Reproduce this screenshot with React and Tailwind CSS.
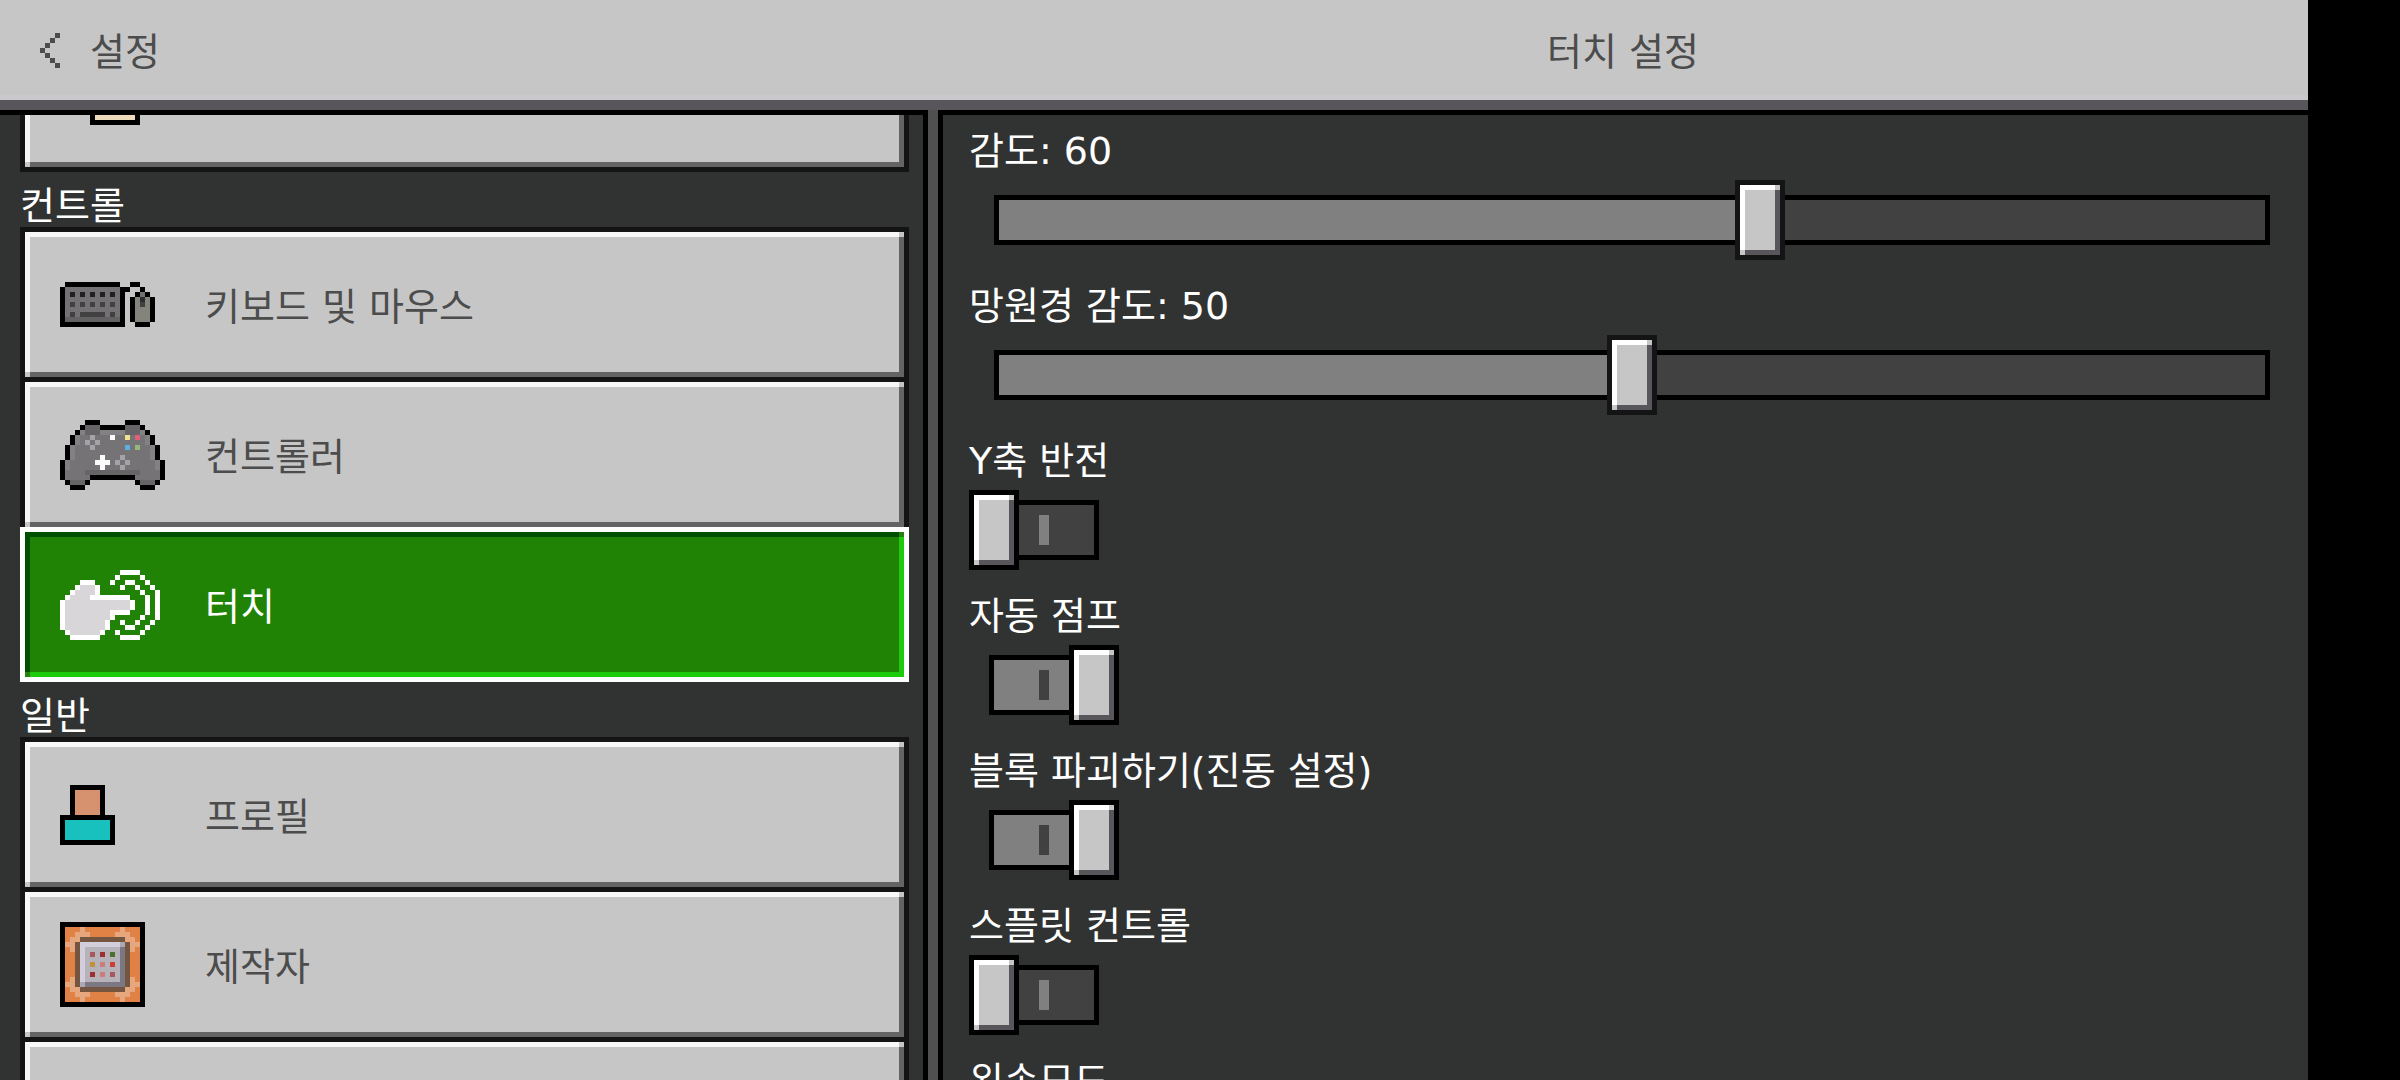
import React, { useState } from "react";

/* Pixel-art sprites: one character per 5px cell, looked up in a palette. */
const SPRITES = {
  back: {
    palette: { "#": "#4c4c4c" },
    rows: ["...#", "..#.", ".#..", "#...", ".#..", "..#.", "...#"],
  },
  figure: {
    palette: { "#": "#000000", s: "#eed9bb" },
    rows: [
      "......##########",
      "......#ssssssss#",
      "......#ssssssss#",
      "......#ssssssss#",
      "......#ssssssss#",
      "......#ssssssss#",
      "......#ssssssss#",
      "......#ssssssss#",
      "......#ssssssss#",
      "......#ssssssss#",
      "......#ssssssss#",
      "......##########",
    ],
  },
  keyboard: {
    palette: {
      "#": "#000000",
      b: "#737173",
      c: "#636163",
      k: "#212021",
      l: "#424142",
      d: "#2c2c2c",
      g: "#737173",
      m: "#84847c",
    },
    rows: [
      ".###########..##...",
      "#bbbbbbbbbbb##..#..",
      "#bkbkbkbkbkb#..#g#.",
      "#bbbbbbbbbbb#.#mdm#",
      "#blblblblblb#.#mlm#",
      "#bbbbbbbbbbb#.#mmm#",
      "#blblllllblb#.#mmm#",
      "#ccccccccccc#.#mmm#",
      "#############..###.",
    ],
  },
  gamepad: {
    palette: {
      "#": "#000000",
      g: "#757375",
      h: "#838183",
      e: "#666466",
      p: "#a5a3a8",
      w: "#fbfbfb",
      y: "#ede58c",
      r: "#e0607a",
      b: "#5aaee0",
      v: "#93b87c",
    },
    rows: [
      ".....###.....###.....",
      "....#eee#####eee#....",
      "...#heeehhhhheeeh#...",
      "..#hggpgggwggygrgh#..",
      "..#hgpgpgggggggggh#..",
      ".#hgggpggggggbgvggh#.",
      ".#hgggggggggggggggh#.",
      ".#hgggggwgggpgggggh#.",
      "#hgggggwwwgpgpgggggh#",
      "#hggggggwgggpggggggh#",
      "#ggggeeeeeeeeeeegggg#",
      "#ggggg#########ggggg#",
      ".#eee#.........#eee#.",
      "..###...........###..",
    ],
  },
  touch: {
    palette: { w: "#ffffff", g: "#d8d6d8" },
    rows: [
      "............wwww....",
      "...........w....w...",
      "....www...w..ww..w..",
      "...wgggw....w..w..w.",
      "..wggggw........w..w",
      ".wggggwwwwwwww...w.w",
      "wgggggggggggggw..w.w",
      "wgggggggggggggw..w.w",
      "wgggggggggwwww...w.w",
      "wgggggggggw.....w..w",
      "wggggggggw..w..w..w.",
      "wggggggggw...ww..w..",
      ".wggggggw..w....w...",
      "..wwwwww....wwww....",
    ],
  },
  profile: {
    palette: { "#": "#000000", s: "#d6926e", t: "#18c0be" },
    rows: [
      "..#######..",
      "..#sssss#..",
      "..#sssss#..",
      "..#sssss#..",
      "..#sssss#..",
      "..#sssss#..",
      "###########",
      "#ttttttttt#",
      "#ttttttttt#",
      "#ttttttttt#",
      "#ttttttttt#",
      "###########",
    ],
  },
  creator: {
    palette: {
      "#": "#000000",
      o: "#e08145",
      l: "#e7a77e",
      n: "#735540",
      v: "#d2cedb",
      m: "#aca9b3",
      s: "#b5b2ba",
      d: "#7b7884",
      1: "#a8575a",
      2: "#9c2f2f",
      3: "#4c7030",
      4: "#c0903c",
      5: "#cc7c7c",
      6: "#cc3d38",
    },
    rows: [
      "#################",
      "#ooolooooooolooo#",
      "#oolllooooollloo#",
      "#ollnnnnnnnnnllo#",
      "#llnvvvvvvvvmnll#",
      "#olnvsssssssdnlo#",
      "#oonvs1s2s3sdnoo#",
      "#oonvsssssssdnoo#",
      "#oonvs4s5s6sdnoo#",
      "#oonvsssssssdnoo#",
      "#oonvs2s5s1sdnoo#",
      "#olnvsssssssdnlo#",
      "#llnmddddddddnll#",
      "#ollnnnnnnnnnllo#",
      "#oolllooooollloo#",
      "#ooolooooooolooo#",
      "#################",
    ],
  },
};

function Sprite({ name }) {
  const { palette, rows } = SPRITES[name];
  const cols = rows[0].length;
  return (
    <svg
      width={cols * 5}
      height={rows.length * 5}
      viewBox={`0 0 ${cols} ${rows.length}`}
      shapeRendering="crispEdges"
      aria-hidden="true"
      className="shrink-0"
    >
      {rows.flatMap((row, y) =>
        [...row].map((cell, x) =>
          cell === "." ? null : (
            <rect key={`${x}-${y}`} x={x} y={y} width="1" height="1" fill={palette[cell]} />
          )
        )
      )}
    </svg>
  );
}

const RAISED =
  "border-[#141414] [background:linear-gradient(#c6c6c6,#c6c6c6)_100%_0/5px_5px_no-repeat,linear-gradient(#c6c6c6,#c6c6c6)_0_100%/5px_5px_no-repeat,linear-gradient(#f7f7f7,#f7f7f7)_0_0/100%_5px_no-repeat,linear-gradient(#f7f7f7,#f7f7f7)_0_0/5px_100%_no-repeat,linear-gradient(#656465,#656465)_0_100%/100%_5px_no-repeat,linear-gradient(#656465,#656465)_100%_0/5px_100%_no-repeat,#c6c6c6] text-[#4c4c4c]";

const SELECTED =
  "border-white [background:linear-gradient(#2a7f14,#2a7f14)_100%_0/5px_5px_no-repeat,linear-gradient(#2a7f14,#2a7f14)_0_100%/5px_5px_no-repeat,linear-gradient(#004f00,#004f00)_0_0/100%_5px_no-repeat,linear-gradient(#004f00,#004f00)_0_0/5px_100%_no-repeat,linear-gradient(#1bcb0c,#1bcb0c)_0_100%/100%_5px_no-repeat,linear-gradient(#1bcb0c,#1bcb0c)_100%_0/5px_100%_no-repeat,#218306] text-white";

const SLIDER_THUMB =
  "[&::-webkit-slider-thumb]:appearance-none [&::-webkit-slider-thumb]:box-border [&::-webkit-slider-thumb]:h-20 [&::-webkit-slider-thumb]:w-[50px] [&::-webkit-slider-thumb]:border-5 [&::-webkit-slider-thumb]:border-[#141414] [&::-webkit-slider-thumb]:[background:linear-gradient(#c6c6c6,#c6c6c6)_100%_0/5px_5px_no-repeat,linear-gradient(#c6c6c6,#c6c6c6)_0_100%/5px_5px_no-repeat,linear-gradient(#fff,#fff)_0_0/100%_5px_no-repeat,linear-gradient(#fff,#fff)_0_0/5px_100%_no-repeat,linear-gradient(#58565a,#58565a)_0_100%/100%_5px_no-repeat,linear-gradient(#58565a,#58565a)_100%_0/5px_100%_no-repeat,#c6c6c6]";

const SWITCH_THUMB =
  "before:block before:box-border before:h-20 before:w-[50px] before:border-5 before:border-black before:content-[''] checked:before:ml-[100px] before:[background:linear-gradient(#c6c6c6,#c6c6c6)_100%_0/5px_5px_no-repeat,linear-gradient(#c6c6c6,#c6c6c6)_0_100%/5px_5px_no-repeat,linear-gradient(#fff,#fff)_0_0/100%_5px_no-repeat,linear-gradient(#fff,#fff)_0_0/5px_100%_no-repeat,linear-gradient(#58565a,#58565a)_0_100%/100%_5px_no-repeat,linear-gradient(#58565a,#58565a)_100%_0/5px_100%_no-repeat,#c6c6c6]";

function NavButton({ icon, label, name, selected, onClick }) {
  return (
    <button
      type="button"
      aria-label={name}
      aria-current={selected ? "page" : undefined}
      onClick={onClick}
      className={`-mb-[5px] flex h-[155px] w-full shrink-0 items-center gap-10 border-5 pl-[35px] text-left ${
        selected ? `relative ${SELECTED}` : RAISED
      }`}
    >
      <span className="w-[105px]">{icon && <Sprite name={icon} />}</span>
      <span className="pt-1">{label}</span>
    </button>
  );
}

function NavHeading({ children }) {
  return <h2 className="mt-[5px] h-[55px] shrink-0 leading-[68px]">{children}</h2>;
}

function SliderSetting({ id, label, initial }) {
  const [value, setValue] = useState(initial);
  return (
    <div>
      <label htmlFor={id} className="block pb-2">
        {label}: {value}
      </label>
      <div className="grid items-center">
        <div className="col-start-1 row-start-1 mx-[25px] h-[50px] border-5 border-black bg-[#414141]">
          <div className="h-full bg-[#808080]" style={{ width: `${value}%` }} />
        </div>
        <input
          id={id}
          type="range"
          min="0"
          max="100"
          value={value}
          onChange={(e) => setValue(Number(e.target.value))}
          className={`col-start-1 row-start-1 h-20 w-full appearance-none bg-transparent ${SLIDER_THUMB}`}
        />
      </div>
    </div>
  );
}

function SwitchSetting({ id, label, initial }) {
  const [on, setOn] = useState(initial);
  return (
    <div>
      <label htmlFor={id} className="block pb-2">
        {label}
      </label>
      <div className="grid w-[150px] items-center">
        <div
          className={`col-start-1 row-start-1 mx-5 flex h-[60px] items-center justify-center border-5 border-black ${
            on ? "bg-[#808080]" : "bg-[#414141]"
          }`}
        >
          <div className={`h-[30px] w-[10px] ${on ? "bg-[#414141]" : "bg-[#808080]"}`} />
        </div>
        <input
          id={id}
          type="checkbox"
          role="switch"
          checked={on}
          onChange={(e) => setOn(e.target.checked)}
          className={`col-start-1 row-start-1 h-20 w-[150px] appearance-none ${SWITCH_THUMB}`}
        />
      </div>
    </div>
  );
}

const CONTROLS = [
  { id: "keyboard", icon: "keyboard", label: "키보드 및 마우스" },
  { id: "gamepad", icon: "gamepad", label: "컨트롤러" },
  { id: "touch", icon: "touch", label: "터치" },
];

const GENERAL = [
  { id: "profile", icon: "profile", label: "프로필" },
  { id: "creator", icon: "creator", label: "제작자" },
  { id: "more", name: "더 보기" },
];

export default function App() {
  const [page, setPage] = useState("touch");
  const renderItem = ({ id, ...item }) => (
    <NavButton key={id} {...item} selected={page === id} onClick={() => setPage(id)} />
  );

  return (
    <div className="flex h-screen overflow-hidden bg-black font-['DejaVu_Sans','Noto_Sans_CJK_KR',sans-serif] text-[38px] leading-[42px]">
      <div className="flex min-w-0 flex-1 flex-col">
        <header className="grid h-[110px] shrink-0 grid-cols-[minmax(0,938fr)_minmax(0,1370fr)] items-center border-b-10 border-[#58565a] bg-[#c6c6c6] text-[#4c4c4c] shadow-[inset_0_-5px_#c9c9cc]">
          <button type="button" className="flex items-center gap-[30px] justify-self-start pl-10">
            <Sprite name="back" />
            <span className="pt-1">설정</span>
          </button>
          <h1 className="pt-1 text-center">터치 설정</h1>
        </header>

        <div className="grid min-h-0 flex-1 grid-cols-[minmax(0,928fr)_minmax(0,1380fr)] bg-[#313333] text-white">
          <nav className="flex min-h-0 flex-col overflow-hidden border-t-5 border-r-5 border-black pr-[14px] pl-5">
            <div className="-mt-[98px] flex flex-col">
              <NavButton icon="figure" name="접근성" />
              <NavHeading>컨트롤</NavHeading>
              {CONTROLS.map(renderItem)}
              <NavHeading>일반</NavHeading>
              {GENERAL.map(renderItem)}
            </div>
          </nav>

          <main className="min-h-0 border-l-10 border-[#515051]">
            <div className="flex h-full flex-col gap-[25px] overflow-hidden border-t-5 border-l-5 border-black pt-[15px] pr-[13px] pl-[26px]">
              <SliderSetting id="sensitivity" label="감도" initial={60} />
              <SliderSetting id="spyglass" label="망원경 감도" initial={50} />
              <SwitchSetting id="invert-y" label="Y축 반전" initial={false} />
              <SwitchSetting id="auto-jump" label="자동 점프" initial={true} />
              <SwitchSetting id="vibration" label="블록 파괴하기(진동 설정)" initial={true} />
              <SwitchSetting id="split" label="스플릿 컨트롤" initial={false} />
              <SwitchSetting id="left-hand" label="왼손모드" initial={false} />
            </div>
          </main>
        </div>
      </div>
      <div className="w-[92px] shrink-0 bg-black" />
    </div>
  );
}
